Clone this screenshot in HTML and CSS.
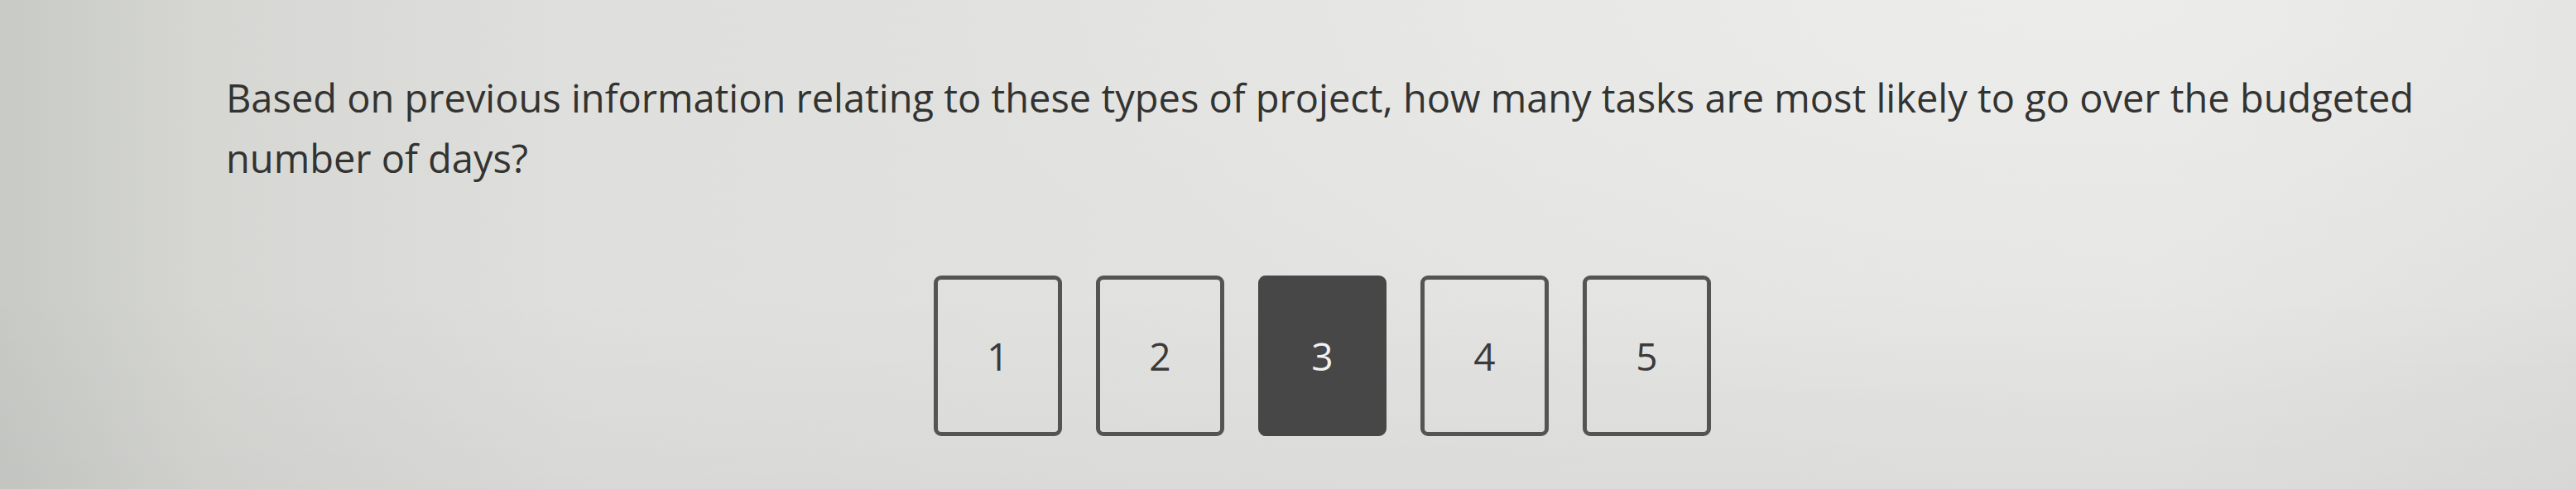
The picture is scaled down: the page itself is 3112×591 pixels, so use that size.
FILE: index.html
```html
<!DOCTYPE html>
<html lang="en">
<head>
<meta charset="utf-8">
<title>Question</title>
<link rel="stylesheet" href="styles.css">
</head>
<body>
<main class="page">
  <p class="question">Based on previous information relating to these types of project, how many tasks are most likely to go over the budgeted number of days?</p>
  <div class="options">
    <button class="option">1</button>
    <button class="option">2</button>
    <button class="option selected">3</button>
    <button class="option">4</button>
    <button class="option">5</button>
  </div>
</main>
</body>
</html>
```
FILE: styles.css
```css
html, body {
  margin: 0;
  padding: 0;
}
body {
  width: 3112px;
  height: 591px;
  overflow: hidden;
  font-family: "Open Sans", "Noto Sans", sans-serif;
  color: #333331;
  background:
    radial-gradient(ellipse 1400px 500px at 2500px 0px, rgba(240,240,238,0.7), rgba(240,240,238,0) 100%),
    linear-gradient(180deg, rgba(0,0,0,0) 60%, rgba(0,0,0,0.03) 100%),
    linear-gradient(90deg, #c8cac6 0px, #d6d7d3 250px, #dfe0dd 700px, #e2e2e0 1600px, #e4e4e2 2600px, #dededc 3112px);
}
.page {
  padding: 82px 0 0 273px;
}
.question {
  margin: 0;
  width: 2750px;
  font-size: 47px;
  line-height: 73px;
}
.options {
  display: flex;
  gap: 41px;
  margin: 105px 0 0 855px;
}
.option {
  box-sizing: border-box;
  width: 155px;
  height: 194px;
  border: 5px solid #545454;
  border-radius: 9px;
  background: transparent;
  font-family: "Open Sans", "Noto Sans", sans-serif;
  font-size: 46px;
  color: #3a3a3a;
  padding: 0;
  display: flex;
  align-items: center;
  justify-content: center;
}
.option.selected {
  background: #474747;
  border-color: #474747;
  color: #f2f2f2;
}
```
